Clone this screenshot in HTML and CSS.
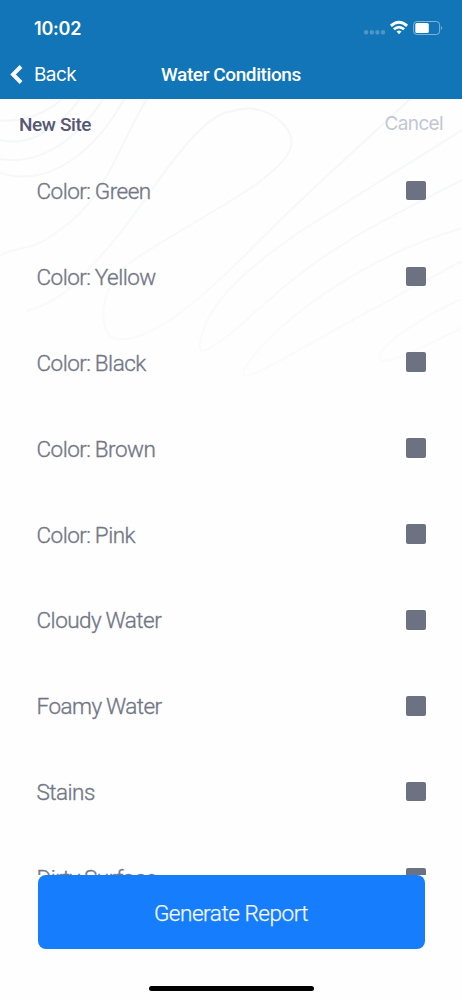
FILE: index.html
```
<!DOCTYPE html>
<html lang="en">
<head>
<meta charset="utf-8">
<title>Water Conditions</title>
<link rel="stylesheet" href="styles.css">
</head>
<body>
<div class="screen">
  <header class="header">
    <div class="status">
      <span class="time">10:02</span>
      <svg class="indicators" width="80" height="16" viewBox="0 0 80 16">
        <g fill="#fff" opacity=".25"><rect x="1" y="10.3" width="4.2" height="4.2" rx="1.4"/><rect x="6.7" y="10.3" width="4.2" height="4.2" rx="1.4"/><rect x="12.3" y="10.3" width="4.2" height="4.2" rx="1.4"/><rect x="17.9" y="10.3" width="4.2" height="4.2" rx="1.4"/></g>
        <g fill="none" stroke="#fff" stroke-width="2.8"><path d="M27.900 5.900 Q36 -1.300 44.100 5.900"/><path d="M30.900 9.300 Q36 4.900 41.100 9.300"/></g>
        <path d="M33.5 11.6 Q36 9.6 38.5 11.6 L36 14.3Z" fill="#fff"/>
        <rect x="50.6" y="1.5" width="26" height="13" rx="3.3" fill="none" stroke="#fff" opacity=".45"/>
        <rect x="52.3" y="3" width="13.5" height="10" rx="1.5" fill="#fff"/>
        <path d="M78 6 Q80 8 78 10Z" fill="#fff" opacity=".5"/>
      </svg>
    </div>
    <nav class="nav">
      <a class="back"><svg width="14" height="20" viewBox="0 0 14 20"><path d="M12 1.500 L4 9.500 L12 17.500" fill="none" stroke="#fff" stroke-width="3.9"/></svg><span>Back</span></a>
      <h1 class="title">Water Conditions</h1>
    </nav>
  </header>
  <main class="content">
    <svg class="contours" viewBox="0 99 462 290" width="462" height="290">
      <defs><linearGradient id="fade" gradientUnits="userSpaceOnUse" x1="0" y1="99" x2="0" y2="385"><stop offset="0" stop-color="#f4f6f7"/><stop offset="1" stop-color="#fbfbfc"/></linearGradient></defs>
      <g fill="none" stroke="url(#fade)" stroke-width="2">
        <path d="M0 120.5C25 122 48 112 62 99"/>
        <path d="M0 140C28 147 57 130 80 99"/>
        <path d="M0 159C40 166 77 140 103 99"/>
        <path d="M0 173C52 189 98 147 124 99"/>
        <path d="M0 256C15 245 30 254 58 231C105 202 120 142 147 99"/>
        <path d="M27 311C60 302 78 282 93 264C127 230 152 186 180 152C197 131 215 113 231 111.500C257 103 276 115 286 127C298 144 292 157 258 183C210 216 160 240 127 265C107 280 96 314 109 335C118 345 147 338 181 312C217 286 260 239 298 203C340 163 384 124 410 99"/>
        <path d="M462 130C405 166 346 202 298 233C255 263 215 295 203 331C198 347 199 354 206 350C236 334 263 302 300 274C345 239 397 213 462 180"/>
        <path d="M462 228C398 247 338 280 292 318C266 339 235 373 246 376C264 373 318 337 381 305C409 289 434 276 462 261"/>
        <path d="M462 299C428 314 374 347 380 359C386 367 423 347 462 328"/>
      </g>
    </svg>
    <div class="bar"><h2 class="site">New Site</h2><a class="cancel">Cancel</a></div>
    <ul class="list">
      <li class="row"><span class="label">Color: Green</span><i class="check"></i></li>
      <li class="row"><span class="label">Color: Yellow</span><i class="check"></i></li>
      <li class="row"><span class="label">Color: Black</span><i class="check"></i></li>
      <li class="row"><span class="label">Color: Brown</span><i class="check"></i></li>
      <li class="row"><span class="label">Color: Pink</span><i class="check"></i></li>
      <li class="row"><span class="label">Cloudy Water</span><i class="check"></i></li>
      <li class="row"><span class="label">Foamy Water</span><i class="check"></i></li>
      <li class="row"><span class="label">Stains</span><i class="check"></i></li>
      <li class="row"><span class="label">Dirty Surface</span><i class="check"></i></li>
    </ul>
  </main>
  <footer class="footer">
    <button class="report">Generate Report</button>
    <div class="home"></div>
  </footer>
</div>
</body>
</html>
```
FILE: styles.css
```
* { box-sizing: border-box; }
body { margin: 0; background: #fefefe; font-family: Roboto, "Liberation Sans", sans-serif; }
.screen { height: 1000px; width: 462px; display: flex; flex-direction: column; overflow: hidden; }
.header { height: 99px; flex: none; background: #1175b7; color: #fff; }
.status { height: 50px; padding: 20px 19px 0 34px; display: flex; justify-content: space-between; align-items: flex-start; }
.time { font: 600 18px/17px Inter, sans-serif; letter-spacing: -.2px; }
.nav { height: 49px; display: grid; grid-template-columns: 1fr auto 1fr; align-items: center; }
.back { display: flex; align-items: center; gap: 11px; padding-left: 9px; font: 400 19px/24px Inter, sans-serif; letter-spacing: -.6px; }
.title { margin: 0; font-size: 19px; line-height: 24px; font-weight: 500; letter-spacing: -.4px; }
.content { flex: 1; min-height: 0; overflow: hidden; position: relative; }
.contours { position: absolute; top: 0; left: 0; z-index: -1; }
.bar { height: 48.5px; padding: 2px 19px 0; display: flex; align-items: center; justify-content: space-between; }
.site { margin: 0; color: #555875; font-size: 19px; font-weight: 500; letter-spacing: -.4px; }
.cancel { color: #c2c7d5; font: 400 19px/24px Inter, sans-serif; letter-spacing: -.65px; }
.list { list-style: none; margin: 0; padding: 0; }
.row { height: 85.9px; padding: 0 36.5px; display: flex; align-items: center; justify-content: space-between; }
.label { padding-top: 1px; color: #727786; font-size: 22.5px; font-weight: 300; letter-spacing: -.52px; word-spacing: -.7px; line-height: 28px; -webkit-text-stroke: .35px #727786; }
.check { width: 19.5px; height: 19.5px; border-radius: 2px; background: #6d7282; }
.footer { height: 125px; flex: none; display: flex; flex-direction: column; align-items: center; justify-content: space-between; padding-bottom: 9px; }
.report { width: 387px; height: 74px; padding-top: 3px; border: 0; border-radius: 8px; background: #167efc; color: #f5f9ff; font: 300 22.5px/28px Roboto, sans-serif; letter-spacing: -.45px; -webkit-text-stroke: .25px #f5f9ff; }
.home { width: 165px; height: 5.500px; border-radius: 3px; background: #000; }
```
